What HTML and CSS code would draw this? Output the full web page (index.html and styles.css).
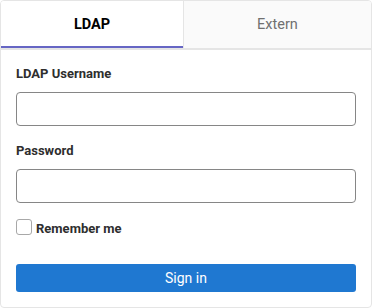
FILE: index.html
```html
<!DOCTYPE html>
<html lang="en">
<head>
    <meta charset="UTF-8">
    <title>Sign in</title>
    <link rel="stylesheet" href="styles.css">
</head>
<body>
    <div class="login-box">
        <ul class="nav-tabs">
            <li class="tab active">LDAP</li>
            <li class="tab">Extern</li>
        </ul>
        <form class="login-body">
            <div class="form-group">
                <label for="username">LDAP Username</label>
                <input type="text" id="username" class="form-control">
            </div>
            <div class="form-group">
                <label for="password">Password</label>
                <input type="password" id="password" class="form-control">
            </div>
            <label class="remember-me">
                <span class="checkbox"></span>
                <span>Remember me</span>
            </label>
            <button type="button" class="btn-signin">Sign in</button>
        </form>
    </div>
</body>
</html>
```

FILE: styles.css
```css
body {
    margin: 0;
    background-color: #ffffff;
    font-family: Roboto, "Liberation Sans", sans-serif;
    color: #2e2e2e;
}

.login-box {
    width: 372px;
    height: 308px;
    box-sizing: border-box;
    border: 1px solid #e5e5e5;
    border-radius: 4px;
    overflow: hidden;
}

.nav-tabs {
    display: grid;
    grid-template-columns: 182px 1fr;
    margin: 0;
    padding: 0;
    list-style: none;
    border-bottom: 2px solid #e5e5e5;
}

.tab {
    height: 47px;
    display: flex;
    justify-content: center;
    align-items: center;
    padding-bottom: 1px;
    box-sizing: border-box;
    font-size: 14.5px;
    color: #707070;
    background-color: #fafafa;
    border-left: 1px solid #e5e5e5;
}

.tab.active {
    font-weight: bold;
    color: #000000;
    background-color: #ffffff;
    border-left: none;
    box-shadow: inset 0 -2px 0 #6666c4;
}

.login-body {
    padding: 14px 15px 15px;
}

.form-group {
    margin-bottom: 15px;
}

.form-group label {
    display: block;
    font-size: 13px;
    font-weight: bold;
    line-height: 20px;
    margin-bottom: 8px;
}

.form-control {
    display: block;
    width: 100%;
    height: 34px;
    box-sizing: border-box;
    border: 1px solid #868686;
    border-radius: 4px;
    background-color: #ffffff;
    outline: none;
}

.remember-me {
    display: flex;
    align-items: flex-end;
    gap: 4px;
    margin-top: 16px;
    font-size: 13px;
    font-weight: bold;
    line-height: 12px;
}

.checkbox {
    width: 14px;
    height: 14px;
    border: 1px solid #a8a8a8;
    border-radius: 3px;
    background-color: #ffffff;
}

.btn-signin {
    display: block;
    width: 100%;
    height: 28px;
    margin-top: 29px;
    border: none;
    border-radius: 3px;
    background-color: #1f78d1;
    color: #ffffff;
    font-family: Roboto, sans-serif;
    font-size: 14px;
}
```
